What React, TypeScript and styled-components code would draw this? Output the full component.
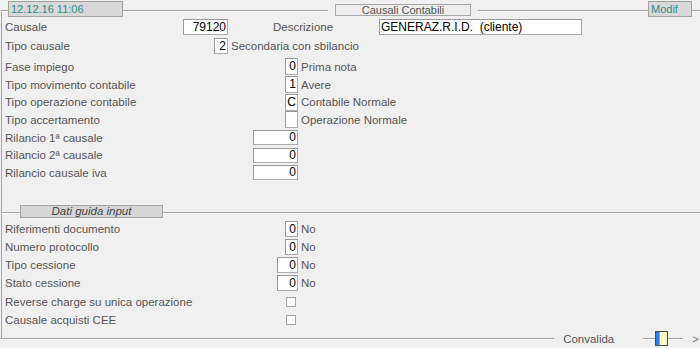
import styled, { createGlobalStyle } from "styled-components"

const GlobalStyle = createGlobalStyle`
html, body {
  margin: 0;
  padding: 0;
  background: #f0f0f0;
}
body {
  font-family: "Liberation Sans", Arial, sans-serif;
}
`

const mainRows = [
  { label: "Fase impiego", value: "0", w: 13, note: "Prima nota" },
  { label: "Tipo movimento contabile", value: "1", w: 13, note: "Avere" },
  { label: "Tipo operazione contabile", value: "C", w: 13, note: "Contabile Normale" },
  { label: "Tipo accertamento", value: "", w: 13, note: "Operazione Normale" },
  { label: "Rilancio 1ª causale", value: "0", w: 45, note: "" },
  { label: "Rilancio 2ª causale", value: "0", w: 45, note: "" },
  { label: "Rilancio causale iva", value: "0", w: 45, note: "" },
]

const guideRows = [
  { label: "Riferimenti documento", value: "0", w: 13 },
  { label: "Numero protocollo", value: "0", w: 13 },
  { label: "Tipo cessione", value: "0", w: 21 },
  { label: "Stato cessione", value: "0", w: 21 },
]

const checkRows = ["Reverse charge su unica operazione", "Causale acquisti CEE"]

const App = () => {
  return (
    <>
      <GlobalStyle />
      <Page>
        <Frame>
          <Header>
            <HeaderRule $w={7} />
            <StampTab $w={115}>12.12.16 11:06</StampTab>
            <HeaderRule $w={205} />
            <TitleTab>Causali Contabili</TitleTab>
            <HeaderRule />
            <StampTab $w={44}>Modif</StampTab>
            <HeaderRule $w={8} />
          </Header>

          <Rows>
            <Row $h={19}>
              <Lead $w={223}>
                <Label>Causale</Label>
                <Box $w={45}>79120</Box>
              </Lead>
              <DescLabel>Descrizione</DescLabel>
              <Box $w={203} $left>GENERAZ.R.I.D.  (cliente)</Box>
            </Row>
            <Row $h={19}>
              <Lead $w={223}>
                <Label>Tipo causale</Label>
                <Box $w={14}>2</Box>
              </Lead>
              <Note>Secondaria con sbilancio</Note>
            </Row>
          </Rows>

          <Rows $top={3}>
            {mainRows.map((r) => (
              <Row key={r.label} $h={17.7}>
                <Lead $w={293}>
                  <Label>{r.label}</Label>
                  <Box $w={r.w} $h={r.w > 20 ? 15 : 17}>{r.value}</Box>
                </Lead>
                {r.note && <Note>{r.note}</Note>}
              </Row>
            ))}
          </Rows>

          <SubHeader>
            <SubRule $w={19} />
            <GuideTab>Dati guida input</GuideTab>
            <SubRule />
          </SubHeader>

          <Rows $top={3}>
            {guideRows.map((r) => (
              <Row key={r.label} $h={18.2}>
                <Lead $w={293}>
                  <Label>{r.label}</Label>
                  <Box $w={r.w} $h={16}>{r.value}</Box>
                </Lead>
                <Note>No</Note>
              </Row>
            ))}
            {checkRows.map((label) => (
              <Row key={label} $h={18.2}>
                <Lead $w={291}>
                  <Label>{label}</Label>
                  <Check />
                </Lead>
              </Row>
            ))}
          </Rows>
        </Frame>

        <Footer>
          <Rule />
          <FooterLabel>Convalida</FooterLabel>
          <Rule $w={12} />
          <Indicator />
          <Rule $w={15} />
          <Chevron>&gt;</Chevron>
        </Footer>
      </Page>
    </>
  )
}

export default App

const Page = styled.div`
width: 700px;
height: 348px;
overflow: hidden;
display: flex;
flex-direction: column;
color: #565656;
font-size: 11.5px;
`

const Frame = styled.div`
margin: 10px 0 0 1px;
padding-bottom: 11px;
border-left: 1px solid #a3a3a3;
display: flex;
flex-direction: column;
`

const Rule = styled.div<{ $w?: number }>`
height: 0;
border-top: 1px solid #a6a6a6;
border-bottom: 1px solid #fdfdfd;
${(p) => (p.$w ? `width: ${p.$w}px; flex: none;` : "flex: 1;")}
`

const Header = styled.div`
display: flex;
align-items: flex-start;
height: 16px;
margin: -9px 0 0 -1px;
`

const HeaderRule = styled(Rule)`
margin-top: 9px;
`

const StampTab = styled.div<{ $w: number }>`
box-sizing: border-box;
width: ${(p) => p.$w}px;
height: 16px;
flex: none;
padding-left: 2px;
background: #d8d8d8;
border: 1px solid #a2a2a2;
color: #2c8e8e;
font-size: 11px;
line-height: 14px;
white-space: nowrap;
`

const TitleTab = styled.div`
box-sizing: border-box;
width: 136px;
height: 12px;
flex: none;
margin: 3px 7px 0;
background: #ededed;
border: 1px solid #a8a8a8;
color: #555;
font-size: 11px;
line-height: 10px;
text-align: center;
white-space: nowrap;
`

const Rows = styled.div<{ $top?: number }>`
display: flex;
flex-direction: column;
padding-left: 3px;
margin-top: ${(p) => p.$top ?? 0}px;
`

const Row = styled.div<{ $h: number }>`
display: flex;
align-items: center;
height: ${(p) => p.$h}px;
`

const Lead = styled.div<{ $w: number }>`
display: flex;
align-items: center;
justify-content: space-between;
width: ${(p) => p.$w}px;
flex: none;
`

const Label = styled.span`
white-space: nowrap;
`

const DescLabel = styled.span`
width: 106px;
margin-left: 45px;
flex: none;
white-space: nowrap;
`

const Box = styled.div<{ $w: number; $h?: number; $left?: boolean }>`
box-sizing: border-box;
width: ${(p) => p.$w}px;
height: ${(p) => p.$h ?? 16}px;
flex: none;
padding: 0 1px;
background: #fff;
border: 1px solid #ababab;
border-top-color: #999;
border-left-color: #999;
color: #000;
font-size: 12px;
line-height: ${(p) => (p.$h ?? 16) - 2}px;
text-align: ${(p) => (p.$left ? "left" : "right")};
white-space: pre;
overflow: hidden;
`

const Note = styled.span`
margin-left: 3px;
white-space: nowrap;
`

const Check = styled.div`
box-sizing: border-box;
width: 10px;
height: 10px;
flex: none;
background: #fbfbfb;
border: 1px solid #a8a8a8;
`

const SubHeader = styled.div`
display: flex;
align-items: flex-start;
height: 12px;
margin: 23px 0 0 -1px;
`

const SubRule = styled(Rule)`
margin-top: 7px;
`

const GuideTab = styled.div`
box-sizing: border-box;
width: 143px;
height: 13px;
flex: none;
background: #d5d5d5;
border: 1px solid #a5a5a5;
color: #444;
font-size: 11.5px;
font-style: italic;
line-height: 11px;
text-align: center;
white-space: nowrap;
`

const Footer = styled.div`
display: flex;
align-items: center;
height: 16px;
margin-top: -9px;
`

const FooterLabel = styled.span`
margin: 0 29px 0 9px;
color: #555;
white-space: nowrap;
`

const Indicator = styled.div`
box-sizing: border-box;
width: 13px;
height: 15px;
flex: none;
border: 1px solid #4a4a4a;
background: linear-gradient(to right, #2a7fe8 0 3px, #d8a22a 3px 4px, #fff6c4 4px);
`

const Chevron = styled.span`
margin: 0 1px 0 9px;
color: #777;
`
